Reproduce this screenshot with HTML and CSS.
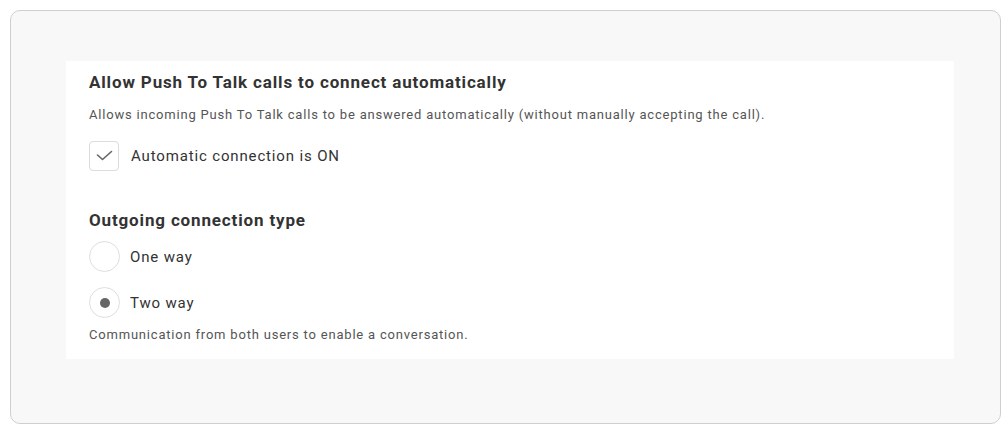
FILE: index.html
```
<!DOCTYPE html>
<html>
<head>
<meta charset="utf-8">
<link rel="stylesheet" href="styles.css">
</head>
<body>
<div class="frame">
  <div class="card">
    <h2 class="title">Allow Push To Talk calls to connect automatically</h2>
    <p class="desc">Allows incoming Push To Talk calls to be answered automatically (without manually accepting the call).</p>
    <label class="check-row">
      <span class="checkbox">
        <svg width="28" height="28" viewBox="0 0 28 28"><path d="M7.5 13 L12.5 17.5 L21.5 9.5" fill="none" stroke="#666" stroke-width="1.6" stroke-linecap="round" stroke-linejoin="round"/></svg>
      </span>
      <span class="label">Automatic connection is ON</span>
    </label>
    <h2 class="title title-2">Outgoing connection type</h2>
    <div class="radio-row first">
      <span class="radio"></span>
      <span class="label">One way</span>
    </div>
    <div class="radio-row second">
      <span class="radio checked"><span class="dot"></span></span>
      <span class="label">Two way</span>
    </div>
    <p class="desc desc-2">Communication from both users to enable a conversation.</p>
  </div>
</div>
</body>
</html>
```
FILE: styles.css
```
* { box-sizing: border-box; }
html, body { margin: 0; padding: 0; background: #fff; }
body { font-family: Roboto, "Liberation Sans", Arial, sans-serif; color: #333; }
.frame {
  margin: 10px 6px 0 10px;
  height: 414px;
  background: #f8f8f8;
  border: 1px solid #cfcfcf;
  border-radius: 10px;
  padding: 50px 46px 0 55px;
}
.card {
  background: #fff;
  padding: 9px 23px 15px 23px;
  height: 298px;
}
.title {
  margin: 0;
  font-size: 17px;
  line-height: 24px;
  font-weight: 700;
  letter-spacing: 0.85px;
  color: #333;
}
.desc {
  margin: 12px 0 0 0;
  font-size: 13px;
  line-height: 18px;
  letter-spacing: 0.8px;
  color: #555;
}
.check-row {
  display: flex;
  align-items: center;
  margin-top: 17px;
  height: 30px;
}
.checkbox {
  width: 30px;
  height: 30px;
  border: 1px solid #dcdcdc;
  border-radius: 4px;
  display: flex;
  align-items: center;
  justify-content: center;
  margin-right: 12px;
}
.label {
  font-size: 15px;
  letter-spacing: 0.85px;
  color: #333;
}
.title-2 { margin-top: 37px; }
.radio-row {
  display: flex;
  align-items: center;
  height: 31px;
}
.radio-row.first { margin-top: 9px; }
.radio-row.second { margin-top: 15px; }
.radio {
  width: 31px;
  height: 31px;
  border: 1px solid #dedede;
  border-radius: 50%;
  display: flex;
  align-items: center;
  justify-content: center;
  margin-right: 10px;
}
.dot {
  width: 10px;
  height: 10px;
  border-radius: 50%;
  background: #666;
}
.desc-2 { margin-top: 8px; }
```
